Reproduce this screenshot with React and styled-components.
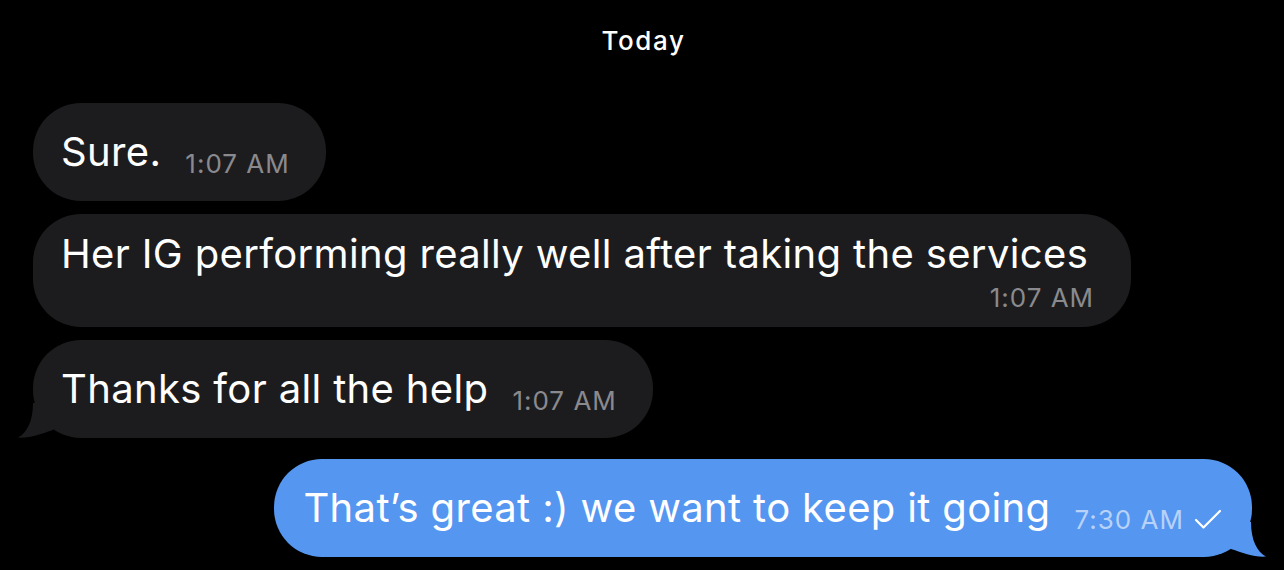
import React from "react";
import styled, { createGlobalStyle } from "styled-components";

const GlobalStyle = createGlobalStyle`
    body {
        margin: 0;
        background: #000;
        font-family: Inter, "Noto Sans", "Liberation Sans", sans-serif;
        -webkit-font-smoothing: antialiased;
    }
`;

const Screen = styled.div`
    width: 1284px;
    height: 570px;
    overflow: hidden;
    background: #000;
    display: flex;
    flex-direction: column;
    padding: 24px 32px 0 33px;
    box-sizing: border-box;
`;

const DateLabel = styled.div`
    align-self: center;
    color: #fff;
    font-size: 26px;
    line-height: 34px;
    font-weight: 500;
    letter-spacing: 1.6px;
    margin: 0 0 45px 2px;
`;

const Thread = styled.div`
    display: flex;
    flex-direction: column;
    gap: 13px;
`;

const Bubble = styled.div`
    position: relative;
    align-self: ${(p) => (p.out ? "flex-end" : "flex-start")};
    margin-top: ${(p) => (p.out ? "8px" : "0")};
    display: flex;
    flex-direction: ${(p) => (p.stacked ? "column" : "row")};
    align-items: flex-end;
    gap: ${(p) => (p.stacked ? "5px" : "24px")};
    padding: ${(p) =>
        p.stacked ? "16px 37px 14px 28px" : p.out ? "25px 30px 25px 29px" : "25px 36px 25px 28px"};
    border-radius: 48px;
    background: ${(p) => (p.out ? "#5596f1" : "#1c1c1e")};
    color: #fff;
`;

const Text = styled.span`
    align-self: flex-start;
    margin-right: ${(p) => (p.stacked ? "6px" : "0")};
    font-size: 40px;
    line-height: 48px;
    letter-spacing: 0.35px;
    white-space: nowrap;
`;

const Meta = styled.span`
    display: flex;
    align-items: center;
    gap: 10px;
    font-size: 26px;
    line-height: 30px;
    letter-spacing: 1px;
    margin-bottom: ${(p) => (p.stacked ? "0" : "-3px")};
    white-space: nowrap;
    color: ${(p) => (p.out ? "#b8d2f8" : "#8a8a8e")};
`;

const Tail = styled.svg`
    position: absolute;
    bottom: 0;
    ${(p) => (p.out ? "right: -15px; transform: scaleX(-1);" : "left: -16px;")}
    width: 40px;
    height: 35px;
`;

function BubbleTail({ out }) {
    return (
        <Tail out={out} viewBox="0 0 40 35">
            <path
                d="M16 0 C16 18 10 30 1 34.5 C12 35.5 24 31 36 27 L36 0 Z"
                fill={out ? "#5596f1" : "#1c1c1e"}
            />
        </Tail>
    );
}

function Check() {
    return (
        <svg width="28" height="22" viewBox="0 0 28 22">
            <path d="M2 11 L9.5 18.5 L26 2" fill="none" stroke="#fff" strokeWidth="2.2" strokeLinecap="round" strokeLinejoin="round" />
        </svg>
    );
}

const messages = [
    { text: "Sure.", time: "1:07 AM" },
    { text: "Her IG performing really well after taking the services", time: "1:07 AM", stacked: true },
    { text: "Thanks for all the help", time: "1:07 AM", tail: true },
    { text: "That\u2019s great :) we want to keep it going", time: "7:30 AM", out: true, tail: true },
];

export default function App() {
    return (
        <Screen>
            <GlobalStyle />
            <DateLabel>Today</DateLabel>
            <Thread>
                {messages.map((m, i) => (
                    <Bubble key={i} out={m.out} stacked={m.stacked}>
                        <Text stacked={m.stacked}>{m.text}</Text>
                        <Meta out={m.out} stacked={m.stacked}>
                            {m.time}
                            {m.out ? <Check /> : ""}
                        </Meta>
                        {m.tail ? <BubbleTail out={m.out} /> : ""}
                    </Bubble>
                ))}
            </Thread>
        </Screen>
    );
}
